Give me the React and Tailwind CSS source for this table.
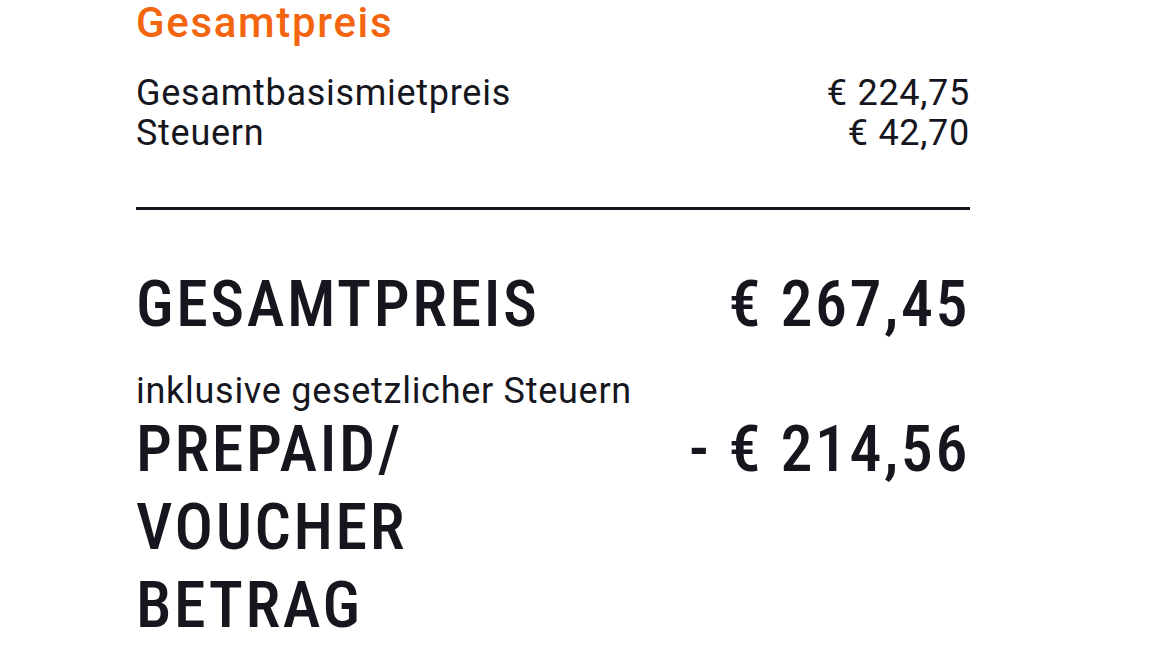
// App.jsx
const Row = ({ label, value }) => (
    <div className="flex items-center justify-between">
        <span>{label}</span>
        <span>{value}</span>
    </div>
);

const App = () => {
    return (
        <div className="min-h-screen bg-white font-['Roboto',sans-serif] text-[#16161e]">
            <div className="ml-[136px] w-[834px]">
                {/* Header */}
                <h2 className="text-[42px] leading-[46px] font-medium tracking-[0.04em] text-[#f4650f]">
                    Gesamtpreis
                </h2>

                {/* Breakdown */}
                <div className="mt-[27px] text-[36px] leading-[40px] tracking-[0.02em]">
                    <Row label="Gesamtbasismietpreis" value="€ 224,75" />
                    <Row label="Steuern" value="€ 42,70" />
                </div>

                <hr className="mt-[54px] border-t-[3px] border-[#16161e]" />

                {/* Total */}
                <div className="mt-[56px] flex items-start justify-between text-[64px] leading-[78px] font-medium tracking-[0.04em] uppercase font-stretch-condensed">
                    <span>Gesamtpreis</span>
                    <span>€ 267,45</span>
                </div>
                <p className="mt-[27px] text-[36px] leading-[40px] tracking-[0.02em]">
                    inklusive gesetzlicher Steuern
                </p>

                {/* Prepaid */}
                <div className="flex items-start justify-between text-[64px] leading-[78px] font-medium tracking-[0.04em] uppercase font-stretch-condensed">
                    <span className="w-[300px]">Prepaid/ Voucher Betrag</span>
                    <span>- € 214,56</span>
                </div>
            </div>
        </div>
    );
};

export default App;
